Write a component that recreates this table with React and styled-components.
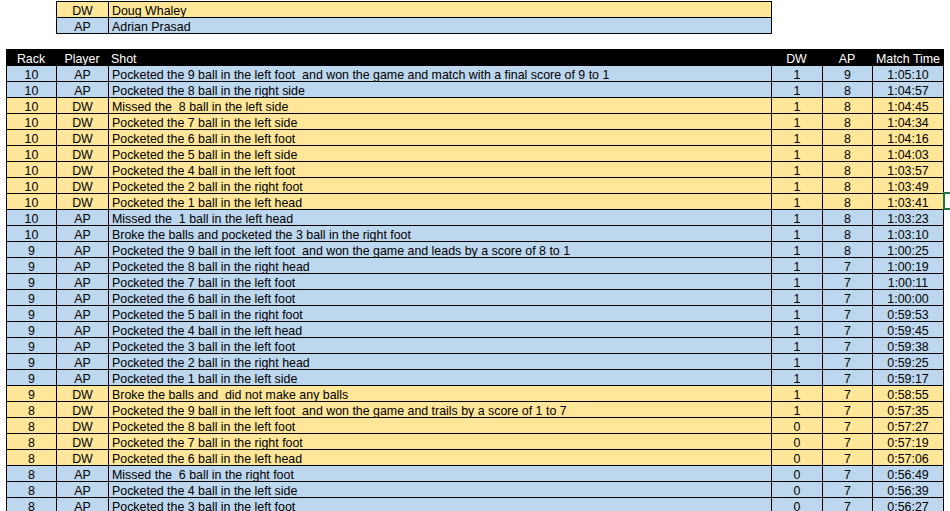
import React from "react";
import styled, { createGlobalStyle } from "styled-components";

const GlobalStyle = createGlobalStyle`
  html, body { margin: 0; padding: 0; background: #ffffff; }
  body {
    font-family: "Liberation Sans", Arial, sans-serif;
    font-size: 12.4px;
    color: #000;
    overflow: hidden;
  }
`;

const BLUE = "#BDD7EE";
const YELLOW = "#FFE699";

const Page = styled.div`
  position: relative;
  width: 950px;
  height: 511px;
  overflow: hidden;
  padding: 1px 0 0 6px;
  box-sizing: border-box;
`;

const Legend = styled.div`
  margin-left: 50px;
  display: flex;
  flex-direction: column;
  border-bottom: 1px solid #000;
  width: 716px;
`;

const LegendRow = styled.div`
  display: grid;
  grid-template-columns: 52px 664px;
  height: 16px;
  background: ${(p) => p.$bg};
`;

const Sheet = styled.div`
  margin-top: 15px;
  display: flex;
  flex-direction: column;
  width: 938px;
`;

const Row = styled.div`
  display: grid;
  grid-template-columns: 50px 52px 663px 51px 50px 72px;
  height: 16px;
  background: ${(p) => p.$bg};
`;

const HeaderRow = styled(Row)`
  background: #000;
  color: #fff;
`;

const Cell = styled.div`
  box-sizing: border-box;
  height: 16px;
  line-height: 15px;
  padding-top: 2px;
  padding-left: ${(p) => (p.$align === "left" ? "3px" : "0")};
  text-align: ${(p) => p.$align || "center"};
  white-space: pre;
  border-left: 1px solid #000;
  border-top: 1px solid #000;
  border-right: ${(p) => (p.$last ? "1px solid #000" : "none")};
`;

const HeadCell = styled.div`
  box-sizing: border-box;
  height: 16px;
  line-height: 15px;
  padding-top: 3px;
  padding-left: ${(p) => (p.$align === "left" ? "3px" : "0")};
  text-align: ${(p) => p.$align || "center"};
  white-space: pre;
`;

const Selection = styled.div`
  position: absolute;
  left: 943px;
  top: 192px;
  width: 20px;
  height: 18px;
  box-sizing: border-box;
  border: 2px solid #217346;
  background: #fff;
`;

const rows = [
  ["10", "AP", "Pocketed the 9 ball in the left foot  and won the game and match with a final score of 9 to 1", "1", "9", "1:05:10"],
  ["10", "AP", "Pocketed the 8 ball in the right side", "1", "8", "1:04:57"],
  ["10", "DW", "Missed the  8 ball in the left side", "1", "8", "1:04:45"],
  ["10", "DW", "Pocketed the 7 ball in the left side", "1", "8", "1:04:34"],
  ["10", "DW", "Pocketed the 6 ball in the left foot", "1", "8", "1:04:16"],
  ["10", "DW", "Pocketed the 5 ball in the left side", "1", "8", "1:04:03"],
  ["10", "DW", "Pocketed the 4 ball in the left foot", "1", "8", "1:03:57"],
  ["10", "DW", "Pocketed the 2 ball in the right foot", "1", "8", "1:03:49"],
  ["10", "DW", "Pocketed the 1 ball in the left head", "1", "8", "1:03:41"],
  ["10", "AP", "Missed the  1 ball in the left head", "1", "8", "1:03:23"],
  ["10", "AP", "Broke the balls and pocketed the 3 ball in the right foot", "1", "8", "1:03:10"],
  ["9", "AP", "Pocketed the 9 ball in the left foot  and won the game and leads by a score of 8 to 1", "1", "8", "1:00:25"],
  ["9", "AP", "Pocketed the 8 ball in the right head", "1", "7", "1:00:19"],
  ["9", "AP", "Pocketed the 7 ball in the left foot", "1", "7", "1:00:11"],
  ["9", "AP", "Pocketed the 6 ball in the left foot", "1", "7", "1:00:00"],
  ["9", "AP", "Pocketed the 5 ball in the right foot", "1", "7", "0:59:53"],
  ["9", "AP", "Pocketed the 4 ball in the left head", "1", "7", "0:59:45"],
  ["9", "AP", "Pocketed the 3 ball in the left foot", "1", "7", "0:59:38"],
  ["9", "AP", "Pocketed the 2 ball in the right head", "1", "7", "0:59:25"],
  ["9", "AP", "Pocketed the 1 ball in the left side", "1", "7", "0:59:17"],
  ["9", "DW", "Broke the balls and  did not make any balls", "1", "7", "0:58:55"],
  ["8", "DW", "Pocketed the 9 ball in the left foot  and won the game and trails by a score of 1 to 7", "1", "7", "0:57:35"],
  ["8", "DW", "Pocketed the 8 ball in the left foot", "0", "7", "0:57:27"],
  ["8", "DW", "Pocketed the 7 ball in the right foot", "0", "7", "0:57:19"],
  ["8", "DW", "Pocketed the 6 ball in the left head", "0", "7", "0:57:06"],
  ["8", "AP", "Missed the  6 ball in the right foot", "0", "7", "0:56:49"],
  ["8", "AP", "Pocketed the 4 ball in the left side", "0", "7", "0:56:39"],
  ["8", "AP", "Pocketed the 3 ball in the left foot", "0", "7", "0:56:27"],
];

export default function App() {
  return (
    <>
      <GlobalStyle />
      <Page>
        <Legend>
          <LegendRow $bg={YELLOW}>
            <Cell>DW</Cell>
            <Cell $align="left" $last>Doug Whaley</Cell>
          </LegendRow>
          <LegendRow $bg={BLUE}>
            <Cell>AP</Cell>
            <Cell $align="left" $last>Adrian Prasad</Cell>
          </LegendRow>
        </Legend>
        <Sheet>
          <HeaderRow>
            <HeadCell>Rack</HeadCell>
            <HeadCell>Player</HeadCell>
            <HeadCell $align="left">Shot</HeadCell>
            <HeadCell>DW</HeadCell>
            <HeadCell>AP</HeadCell>
            <HeadCell>Match Time</HeadCell>
          </HeaderRow>
          {rows.map((r, i) => (
            <Row key={i} $bg={r[1] === "DW" ? YELLOW : BLUE}>
              <Cell>{r[0]}</Cell>
              <Cell>{r[1]}</Cell>
              <Cell $align="left">{r[2]}</Cell>
              <Cell>{r[3]}</Cell>
              <Cell>{r[4]}</Cell>
              <Cell $last>{r[5]}</Cell>
            </Row>
          ))}
        </Sheet>
        <Selection />
      </Page>
    </>
  );
}
